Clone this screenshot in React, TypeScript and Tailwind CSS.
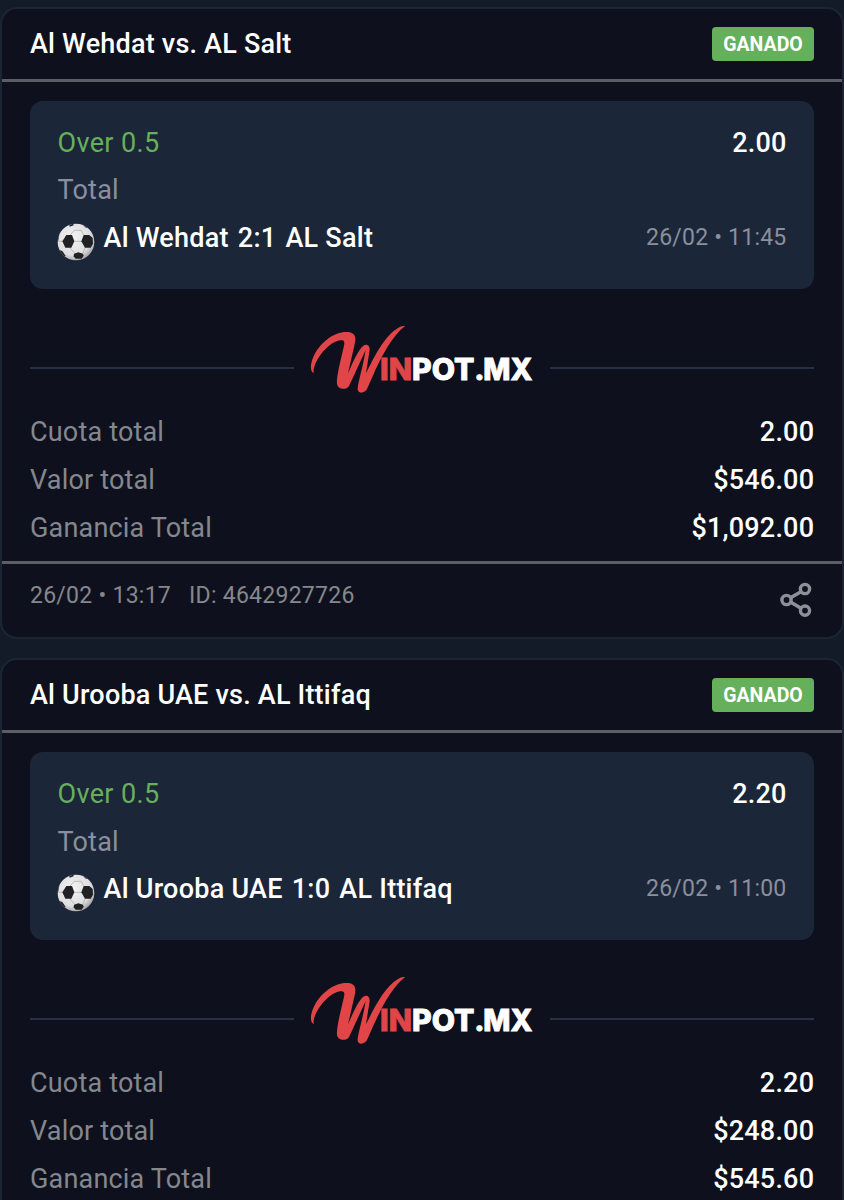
import React from "react";

type Bet = {
  title: string; odds: string; home: string; score: string; away: string; time: string;
  stake: string; payout: string; placed?: string; id?: string;
};

const bets: Bet[] = [
  { title: "Al Wehdat vs. AL Salt", odds: "2.00", home: "Al Wehdat", score: "2:1", away: "AL Salt", time: "26/02 • 11:45", stake: "$546.00", payout: "$1,092.00", placed: "26/02 • 13:17", id: "4642927726" },
  { title: "Al Urooba UAE vs. AL Ittifaq", odds: "2.20", home: "Al Urooba UAE", score: "1:0", away: "AL Ittifaq", time: "26/02 • 11:00", stake: "$248.00", payout: "$545.60" },
];

function Ball() {
  return (
    <svg className="mt-[7px] h-[38px] w-[38px] shrink-0" viewBox="0 0 114 114">
      <defs>
        <clipPath id="ball"><circle cx="57" cy="57" r="55" /></clipPath>
        <radialGradient id="shade" cx="0.42" cy="0.38" r="0.62">
          <stop offset="0" stopColor="#f3f3f3" /><stop offset="0.75" stopColor="#dedee0" /><stop offset="1" stopColor="#a5a5a8" />
        </radialGradient>
      </defs>
      <g clipPath="url(#ball)">
        <rect width="114" height="114" fill="url(#shade)" />
        <path d="M50 55H72M38 37L52 22H73L80 36M37 72L52 90M78 90L85 72M18 55H5" stroke="#a4a4a6" strokeWidth="2" fill="none" />
        <g fill="#202124">
          <path d="M28 36L45 36L52 55L43 74L25 74L16 55Z" />
          <path d="M80 36L97 36L107 45L108 62L101 74L84 74L73 55Z" />
          <path d="M51 92L64 88L78 92L80 98L74 107L56 107L50 100Z" />
          <path d="M5 80L16 84L26 99L18 102Z" />
          <path d="M0 38L7 35L3 56L0 56Z" />
        </g>
        <path d="M36 2L49 0L50 7L38 11ZM75 0L85 6L94 16L84 13Z" fill="#1c2639" />
      </g>
    </svg>
  );
}

function Logo() {
  return (
    <svg className="h-[100px] w-[250px] shrink-0" viewBox="0 0 750 300">
      <path fill="#e14548" d="M42 190C28 184 31 158 43 134C64 93 108 62 145 66C166 69 170 82 163 107L144 190C160 154 174 121 189 108C200 99 213 107 208 126L198 190C222 142 253 78 294 54C302 49 310 46 315 49C283 71 248 131 222 190L202 235C195 252 171 253 173 235C175 214 187 178 197 121C180 155 162 198 147 228C139 242 113 238 111 222C109 202 121 154 131 112C135 96 134 89 121 91C93 94 55 133 43 170C40 180 40 185 42 190Z" />
      <g fontFamily="Inter, sans-serif" fontWeight="800" fontSize="88" strokeWidth="2.5">
        <text x="240" y="209" textLength="96" lengthAdjust="spacingAndGlyphs" fill="#e14548" stroke="#e14548">IN</text>
        <g fill="#fff" stroke="#fff">
          <text x="336" y="209" textLength="187" lengthAdjust="spacingAndGlyphs">POT</text>
          <text x="523" y="209">.</text>
          <text x="550" y="209" textLength="147" lengthAdjust="spacingAndGlyphs">MX</text>
        </g>
      </g>
    </svg>
  );
}

function ShareIcon() {
  return (
    <svg className="h-[36px] w-[34px]" viewBox="0 0 34 36" fill="none" stroke="#8e9099" strokeWidth="3.4">
      <path d="M10.5 15.8L21 9.8M10.5 20L21 26.2" strokeWidth="3.6" />
      <circle cx="6.5" cy="18" r="4.6" /><circle cx="25" cy="7" r="4.6" /><circle cx="25" cy="28.6" r="4.6" />
    </svg>
  );
}

function Row({ label, value }: { label: string; value: string }) {
  return (
    <div className="flex h-[48px] items-center justify-between">
      <span className="tracking-[0.18px] text-[#85878f]">{label}</span>
      <span className="-mr-[0.2px] font-medium tracking-[0.2px] text-white">{value}</span>
    </div>
  );
}

function BetCard({ bet }: { bet: Bet }) {
  return (
    <article className="h-[632px] shrink-0 rounded-[17px] border-2 border-[#1b2635] bg-[#0e111d]">
      <header className="flex h-[73px] items-center justify-between border-b-[3px] border-[#5c5e66] px-[28px]">
        <h2 className="text-[27px] font-medium tracking-[0.2px] text-white">{bet.title}</h2>
        <span className="flex h-[34px] w-[102px] items-center justify-center rounded-[4px] bg-[#67b05b] pt-px text-[19.5px] font-bold text-white">GANADO</span>
      </header>
      <div className="px-[28px] pt-[19px]">
        <section className="h-[188px] rounded-[13px] bg-[#1c2639] px-[27.5px] pt-[18px] text-[27px]">
          <div className="flex h-[48px] items-center justify-between font-medium">
            <span className="font-[450] tracking-[0.35px] text-[#67b05b]">Over 0.5</span>
            <span className="tracking-[0.2px] text-white">{bet.odds}</span>
          </div>
          <div className="flex h-[47px] items-center tracking-[0.2px] text-[#8a8f9d]">Total</div>
          <div className="flex h-[48px] items-center justify-between">
            <div className="-ml-px flex items-center gap-[9px] font-medium tracking-[0.25px] text-white">
              <Ball />
              <span>{bet.home}</span><span>{bet.score}</span><span>{bet.away}</span>
            </div>
            <span className="text-[23px] tracking-[0.22px] text-[#8a8f9d]">{bet.time}</span>
          </div>
        </section>
        <div className="mt-[21px] flex h-[100px] items-center">
          <div className="mt-[16px] h-[2px] w-[264px] bg-[#263148]" />
          <div className="flex flex-1 justify-center pl-[6px]"><div className="-mx-[6px]"><Logo /></div></div>
          <div className="mt-[16px] h-[2px] w-[264px] bg-[#263148]" />
        </div>
        <div className="-mt-[2px] text-[27px]">
          <Row label="Cuota total" value={bet.odds} />
          <Row label="Valor total" value={bet.stake} />
          <Row label="Ganancia Total" value={bet.payout} />
        </div>
      </div>
      <footer className="mt-[9px] flex h-[76px] justify-between border-t-[3px] border-[#5c5e66] px-[28px]">
        <div className="flex h-[65px] items-center gap-[18px] text-[23px] tracking-[0.26px] text-[#85878f]">{bet.id && <><span>{bet.placed}</span><span>ID: {bet.id}</span></>}</div>
        <div className="pt-[18px]"><ShareIcon /></div>
      </footer>
    </article>
  );
}

export default function App() {
  return (
    <main className="flex h-[1200px] w-[844px] flex-col gap-[19.4px] overflow-hidden bg-[#131b28] pt-[7px] font-['Roboto',sans-serif] whitespace-nowrap">
      {bets.map((bet) => <BetCard key={bet.title} bet={bet} />)}
    </main>
  );
}
